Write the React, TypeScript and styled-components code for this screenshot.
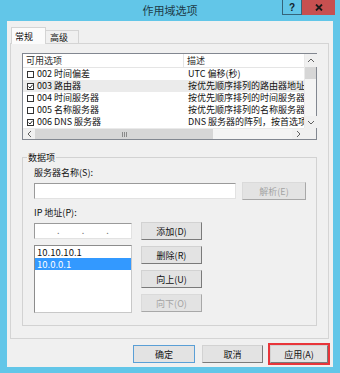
import React from "react";
import styled, { createGlobalStyle } from "styled-components";

const GlobalStyle = createGlobalStyle`
  html, body {
    margin: 0;
    padding: 0;
  }
  body {
    font-family: "Noto Sans CJK SC", "Noto Sans", sans-serif;
    font-size: 9px;
    color: #111;
  }
  * {
    box-sizing: border-box;
  }
`;

const Window = styled.div`
  width: 340px;
  height: 373px;
  background: #62c6e8;
  display: flex;
  flex-direction: column;
`;

const TitleBar = styled.div`
  height: 21px;
  display: grid;
  grid-template-columns: 1fr auto 1fr;
  align-items: start;
`;

const Title = styled.div`
  grid-column: 2;
  font-size: 11px;
  line-height: 21px;
  color: #1d3a47;
`;

const CaptionButtons = styled.div`
  grid-column: 3;
  justify-self: end;
  display: flex;
  margin-right: 5px;
`;

const CaptionButton = styled.div<{ $close?: boolean }>`
  width: ${(p) => (p.$close ? 33 : 20)}px;
  height: 15px;
  display: flex;
  align-items: center;
  justify-content: center;
  background: ${(p) => (p.$close ? "#c75050" : "#62c6e8")};
  border: ${(p) => (p.$close ? "none" : "1px solid #35647a")};
  border-top: none;
  font-family: "Liberation Sans", Arial, sans-serif;
  font-weight: bold;
  font-size: 10px;
  color: #13222a;
`;

const Frame = styled.div`
  flex: 1;
  margin: 0 7px 6px 7px;
  background: #f0f0f0;
  padding: 6px 4px 0 3px;
  display: flex;
  flex-direction: column;
`;

const TabStrip = styled.div`
  display: flex;
  align-items: flex-end;
  height: 17px;
  padding-left: 1px;
  margin-bottom: -1px;
  position: relative;
  z-index: 1;
`;

const Tab = styled.div<{ $active?: boolean }>`
  height: ${(p) => (p.$active ? 17 : 14)}px;
  width: ${(p) => (p.$active ? 35 : 33)}px;
  border: 1px solid #d4d4d4;
  border-bottom: ${(p) => (p.$active ? "none" : "1px solid #d4d4d4")};
  border-left: ${(p) => (p.$active ? "1px solid #d4d4d4" : "none")};
  background: ${(p) => (p.$active ? "#fbfbfb" : "#f0f0f0")};
  padding: ${(p) => (p.$active ? "3px 0 0 3px" : "1px 0 0 4px")};
  line-height: 11px;
`;

const Panel = styled.div`
  border: 1px solid #d4d4d4;
  background: #f0f0f0;
  height: 296px;
  padding: 9px 11px 0 11px;
  display: flex;
  flex-direction: column;
`;

const ListView = styled.div`
  height: 87px;
  border: 1px solid #828790;
  background: #fff;
  display: grid;
  grid-template-columns: 1fr 12px;
  grid-template-rows: 1fr 11px;
`;

const ListContent = styled.div`
  overflow: hidden;
`;

const HeaderRow = styled.div`
  height: 14px;
  display: grid;
  grid-template-columns: 160px 1fr;
  border-bottom: 1px solid #e5e5e5;
`;

const HeaderCell = styled.div`
  padding-left: 3px;
  line-height: 13px;
  color: #2a2a2a;
  & + & {
    border-left: 1px solid #e5e5e5;
  }
`;

const Row = styled.div<{ $selected?: boolean }>`
  height: 12px;
  display: grid;
  grid-template-columns: 160px 1fr;
  background: ${(p) => (p.$selected ? "#ebebeb" : "transparent")};
`;

const Cell = styled.div`
  display: flex;
  align-items: center;
  gap: 3px;
  padding-left: 4px;
  line-height: 12px;
  white-space: nowrap;
  overflow: hidden;
  & + & {
    padding-left: 5px;
  }
`;

const CheckBox = styled.span`
  flex: none;
  width: 7px;
  height: 7px;
  border: 1px solid #333;
  background: #fff;
  display: flex;
  align-items: center;
  justify-content: center;
`;

const VScroll = styled.div`
  display: flex;
  flex-direction: column;
  background: #f4f4f4;
  border-left: 1px solid #eaeaea;
`;

const HScroll = styled.div`
  display: flex;
  background: #f4f4f4;
  border-top: 1px solid #eaeaea;
`;

const ArrowBox = styled.div<{ $size: number }>`
  flex: none;
  width: 12px;
  height: ${(p) => p.$size}px;
  display: flex;
  align-items: center;
  justify-content: center;
  background: #f0f0f0;
`;

const HArrowBox = styled(ArrowBox)`
  width: ${(p) => p.$size}px;
  height: auto;
`;

const Thumb = styled.div<{ $size: number; $horizontal?: boolean }>`
  flex: none;
  ${(p) => (p.$horizontal ? `width: ${p.$size}px;` : `height: ${p.$size}px;`)}
  background: #d6d6d6;
  display: flex;
  align-items: center;
  justify-content: center;
`;

const Track = styled.div`
  flex: 1;
`;

const Corner = styled.div`
  background: #f0f0f0;
`;

const GroupBox = styled.fieldset`
  margin: 12px 0 0 0;
  padding: 0;
  border: 1px solid #d2d2d2;
  min-width: 0;
`;

const Legend = styled.legend`
  margin-left: 4px;
  padding: 0 1px;
  line-height: 11px;
`;

const GroupBody = styled.div`
  padding: 4px 9px 12px 11px;
  display: flex;
  flex-direction: column;
`;

const FieldLabel = styled.div<{ $gap: number }>`
  margin-top: ${(p) => p.$gap}px;
  line-height: 11px;
`;

const FieldRow = styled.div`
  margin-top: 4px;
  display: flex;
  align-items: center;
  gap: 6px;
`;

const TextBox = styled.div<{ $width: number }>`
  width: ${(p) => p.$width}px;
  height: 16px;
  background: #fff;
  border: 1px solid;
  border-color: #9a9a9a #e2e2e2 #e2e2e2 #9a9a9a;
`;

const IpBox = styled(TextBox)`
  margin-top: 1px;
  display: flex;
  align-items: center;
  justify-content: space-evenly;
  color: #777;
  line-height: 10px;
`;

const Button = styled.div<{ $width: number; $disabled?: boolean; $default?: boolean; $mark?: boolean }>`
  width: ${(p) => p.$width}px;
  height: 18px;
  flex: none;
  display: flex;
  align-items: center;
  justify-content: center;
  background: #e3e3e3;
  border: 1px solid;
  border-color: ${(p) =>
    p.$default ? "#5a9fd6" : p.$disabled ? "#dadada #a8a8a8 #a8a8a8 #dadada" : "#d2d2d2 #7a7a7a #7a7a7a #d2d2d2"};
  color: ${(p) => (p.$disabled ? "#a3a3a3" : "#111")};
  outline: ${(p) => (p.$mark ? "2px solid #e8353a" : "none")};
  outline-offset: 0;
`;

const IpGrid = styled.div`
  margin-top: 4px;
  display: grid;
  grid-template-columns: 98px 61px;
  column-gap: 9px;
`;

const Column = styled.div`
  display: flex;
  flex-direction: column;
  gap: 6px;
`;

const AddressList = styled.div`
  height: 68px;
  background: #fff;
  border: 1px solid;
  border-color: #8c8c8c #c8c8c8 #c8c8c8 #8c8c8c;
`;

const AddressItem = styled.div<{ $selected?: boolean }>`
  height: 12px;
  line-height: 12px;
  padding-left: 2px;
  font-size: 9.5px;
  overflow: hidden;
  background: ${(p) => (p.$selected ? "#3399ff" : "transparent")};
  color: ${(p) => (p.$selected ? "#fff" : "#111")};
`;

const ButtonBar = styled.div`
  margin-top: 6px;
  display: flex;
  justify-content: flex-end;
  gap: 7px;
  padding-right: 1px;
`;

const Chevron = ({ dir }: { dir: "up" | "down" | "left" | "right" }) => {
  const pts = {
    up: "1,4 4,1 7,4",
    down: "1,1 4,4 7,1",
    left: "4,1 1,4 4,7",
    right: "1,1 4,4 1,7",
  }[dir];
  const horizontal = dir === "left" || dir === "right";
  return (
    <svg width={horizontal ? 5 : 8} height={horizontal ? 8 : 5} viewBox={horizontal ? "0 0 5 8" : "0 0 8 5"}>
      <polyline points={pts} fill="none" stroke="#606060" strokeWidth="1" />
    </svg>
  );
};

const Check = () => (
  <svg width="5" height="5" viewBox="0 0 5 5">
    <polyline points="0.5,2.5 2,4 4.5,0.8" fill="none" stroke="#222" strokeWidth="1" />
  </svg>
);

const Grip = () => (
  <svg width="7" height="5" viewBox="0 0 7 5">
    <path d="M1.5 0v5M3.5 0v5M5.5 0v5" stroke="#8a8a8a" strokeWidth="1" />
  </svg>
);

const options = [
  { code: "002 时间偏差", desc: "UTC 偏移(秒)", checked: false },
  { code: "003 路由器", desc: "按优先顺序排列的路由器地址阵列", checked: true, selected: true },
  { code: "004 时间服务器", desc: "按优先顺序排列的时间服务器地址", checked: false },
  { code: "005 名称服务器", desc: "按优先顺序排列的名称服务器 [IEN 116]", checked: false },
  { code: "006 DNS 服务器", desc: "DNS 服务器的阵列，按首选项排列", checked: true },
];

const App: React.FC = () => {
  return (
    <Window>
      <GlobalStyle />
      <TitleBar>
        <Title>作用域选项</Title>
        <CaptionButtons>
          <CaptionButton>?</CaptionButton>
          <CaptionButton $close>
            <svg width="8" height="7" viewBox="0 0 8 7">
              <path d="M1 0.5l6 6M7 0.5l-6 6" stroke="#1a1a1a" strokeWidth="1.8" />
            </svg>
          </CaptionButton>
        </CaptionButtons>
      </TitleBar>
      <Frame>
        <TabStrip>
          <Tab $active>常规</Tab>
          <Tab>高级</Tab>
        </TabStrip>
        <Panel>
          <ListView>
            <ListContent>
              <HeaderRow>
                <HeaderCell>可用选项</HeaderCell>
                <HeaderCell>描述</HeaderCell>
              </HeaderRow>
              {options.map((o) => (
                <Row key={o.code} $selected={o.selected}>
                  <Cell>
                    <CheckBox>{o.checked && <Check />}</CheckBox>
                    {o.code}
                  </Cell>
                  <Cell>{o.desc}</Cell>
                </Row>
              ))}
            </ListContent>
            <VScroll>
              <ArrowBox $size={13}>
                <Chevron dir="up" />
              </ArrowBox>
              <Thumb $size={12} />
              <Track />
              <ArrowBox $size={12}>
                <Chevron dir="down" />
              </ArrowBox>
            </VScroll>
            <HScroll>
              <HArrowBox $size={12}>
                <Chevron dir="left" />
              </HArrowBox>
              <Thumb $size={178} $horizontal>
                <Grip />
              </Thumb>
              <Track />
              <HArrowBox $size={12}>
                <Chevron dir="right" />
              </HArrowBox>
            </HScroll>
            <Corner />
          </ListView>
          <GroupBox>
            <Legend>数据项</Legend>
            <GroupBody>
              <FieldLabel $gap={0}>服务器名称(S):</FieldLabel>
              <FieldRow>
                <TextBox $width={202} />
                <Button $width={64} $disabled>
                  解析(E)
                </Button>
              </FieldRow>
              <FieldLabel $gap={7}>IP 地址(P):</FieldLabel>
              <IpGrid>
                <Column>
                  <IpBox $width={98}>
                    <span>.</span>
                    <span>.</span>
                    <span>.</span>
                  </IpBox>
                  <AddressList>
                    <AddressItem>10.10.10.1</AddressItem>
                    <AddressItem $selected>10.0.0.1</AddressItem>
                  </AddressList>
                </Column>
                <Column>
                  <Button $width={61}>添加(D)</Button>
                  <Button $width={61}>删除(R)</Button>
                  <Button $width={61}>向上(U)</Button>
                  <Button $width={61} $disabled>
                    向下(O)
                  </Button>
                </Column>
              </IpGrid>
            </GroupBody>
          </GroupBox>
        </Panel>
        <ButtonBar>
          <Button $width={62} $default>
            确定
          </Button>
          <Button $width={61}>取消</Button>
          <Button $width={58} $mark>
            应用(A)
          </Button>
        </ButtonBar>
      </Frame>
    </Window>
  );
};

export default App;
